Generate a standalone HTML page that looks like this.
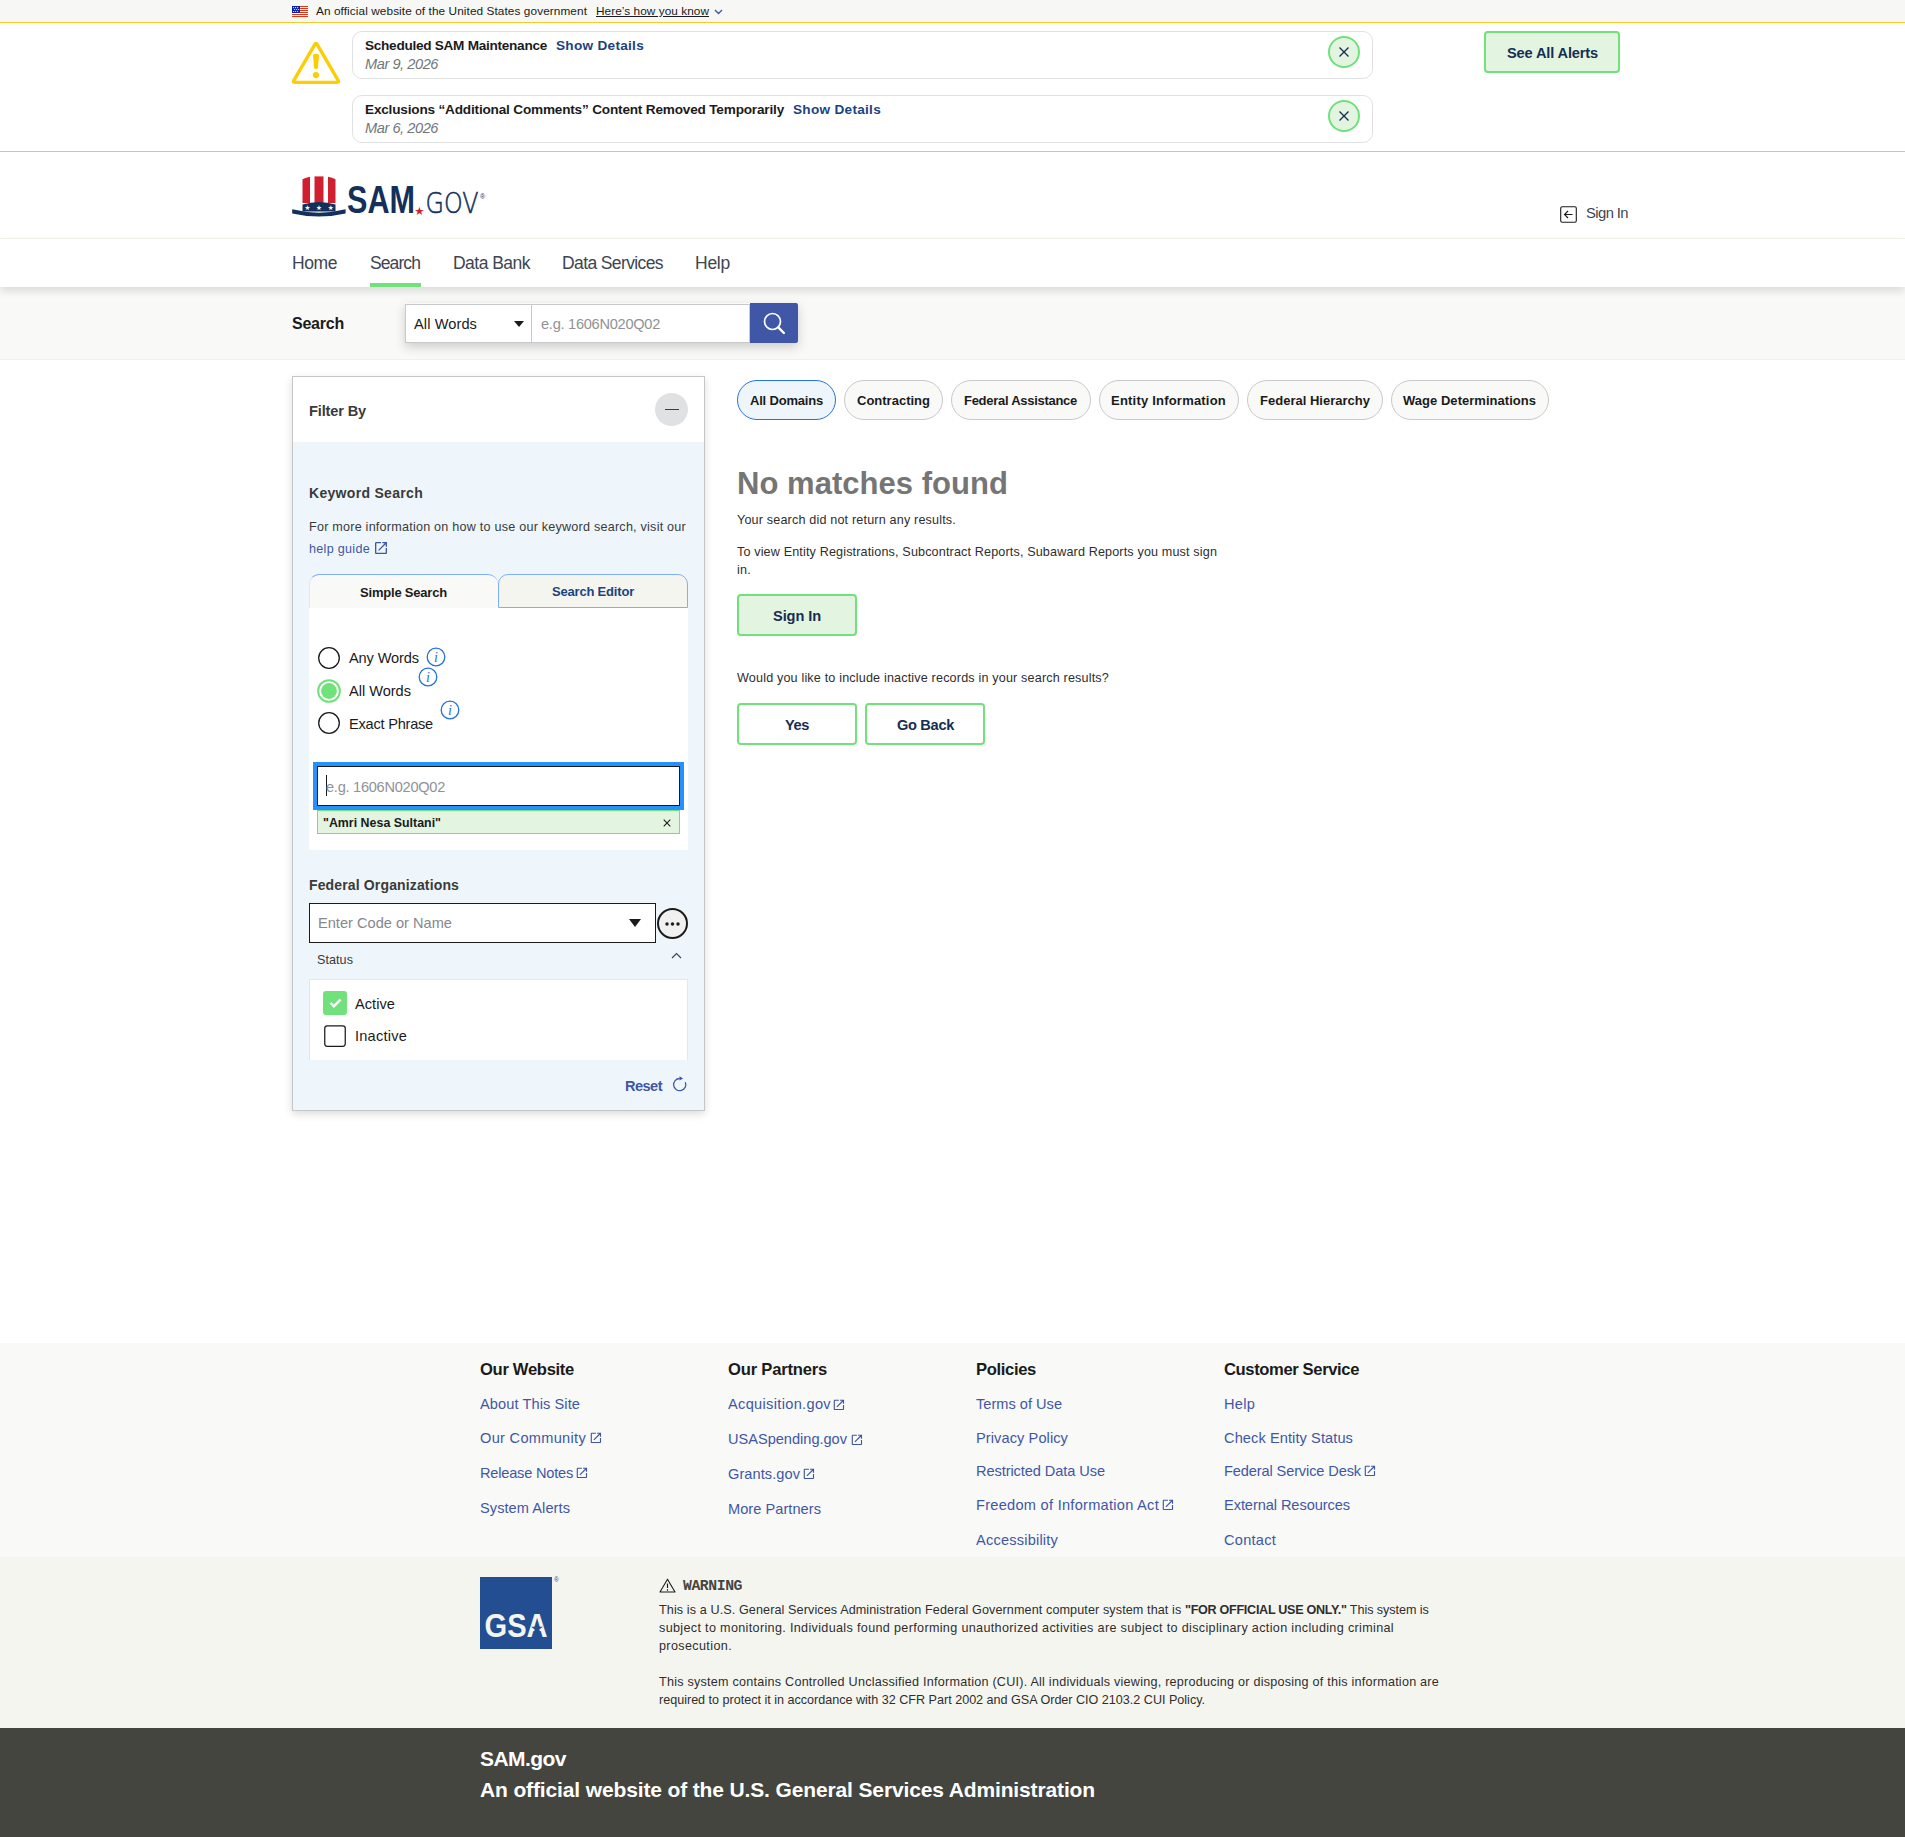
<!DOCTYPE html>
<html lang="en">
<head>
<meta charset="utf-8">
<title>SAM.gov | Search</title>
<style>
html,body{margin:0;padding:0}
body{width:1905px;height:1837px;position:relative;overflow:hidden;background:#fff;font-family:"Liberation Sans",sans-serif;color:#1b1b1b;font-size:14px}
.bg{position:absolute;left:0;width:1905px}
.a{position:absolute}
.t{position:absolute;white-space:nowrap;line-height:20px;height:20px;margin:0;font-weight:normal}
.b{font-weight:bold}
.i{font-style:italic}
.lnk{color:#3f57a6}
svg{position:absolute;overflow:visible}
/* alerts */
.card{position:absolute;left:352px;width:1019px;height:46px;border:1px solid #dfe1e2;border-radius:10px;background:#fff}
.close{position:absolute;left:1328px;width:28px;height:28px;border:2px solid #70e17b;border-radius:50%;background:#e3f5e1}
.btn{position:absolute;box-sizing:border-box;border:2px solid #70e17b;border-radius:4px;background:#fff}
.btn.fill{background:#e3f5e1}
.navy{color:#162e51}
.nav{font-size:17.5px;color:#3d4551;line-height:24px;height:24px}
.pill{position:absolute;top:380px;height:38px;border:1px solid #c9c9c9;border-radius:20px;background:#f9f9f7}
.pill.sel{border-color:#2672de;background:#eff6fb}
.pt{font-size:13px;font-weight:bold;top:391px}
.p13{font-size:12.6px;color:#2e2e2e}
.fh{font-size:16.6px;font-weight:bold;top:1359.8px}
.fl{font-size:14.6px;color:#3f57a6}
.radio{position:absolute;width:19.6px;height:19.6px;border:1.7px solid #1b1b1b;border-radius:50%;background:#fff}
.rl{font-size:14.6px}
.info{position:absolute;width:16px;height:16px;border:1.5px solid #2672de;border-radius:50%;color:#2672de;font-size:13px;line-height:16px;text-align:center;font-style:italic;font-family:"Liberation Serif",serif;font-weight:bold}
</style>
</head>
<body>

<!-- ===== government banner ===== -->
<section aria-label="Official government website">
  <div class="bg" style="top:0;height:22px;background:#f7f7f5"></div>
  <svg class="a" style="left:292px;top:6px" width="16" height="11" viewBox="0 0 16 11">
    <rect width="16" height="11" fill="#fff"/>
    <g fill="#dd3618"><rect y="0" width="16" height="1"/><rect y="2" width="16" height="1"/><rect y="4" width="16" height="1"/><rect y="6" width="16" height="1"/><rect y="8" width="16" height="1"/><rect y="10" width="16" height="1"/></g>
    <rect width="8" height="7" fill="#0a1fb0"/>
    <g fill="#fff"><circle cx="1.6" cy="1.6" r="0.62"/><circle cx="3.6" cy="1.6" r="0.62"/><circle cx="5.6" cy="1.6" r="0.62"/><circle cx="2.6" cy="3.5" r="0.62"/><circle cx="4.6" cy="3.5" r="0.62"/><circle cx="6.6" cy="3.5" r="0.62"/><circle cx="1.6" cy="5.5" r="0.62"/><circle cx="3.6" cy="5.5" r="0.62"/><circle cx="5.6" cy="5.5" r="0.62"/></g>
  </svg>
  <span class="t" style="letter-spacing:0.085px;left:316px;top:1px;font-size:11.8px">An official website of the United States government</span>
  <span class="t" style="letter-spacing:0.057px;left:596px;top:1px;font-size:11.8px;text-decoration:underline">Here’s how you know</span>
  <svg style="left:714px;top:9px" width="9" height="6" viewBox="0 0 9 6"><path d="M1 1l3.5 3.5L8 1" fill="none" stroke="#3f57a6" stroke-width="1.4"/></svg>
</section>

<!-- ===== alerts ===== -->
<section aria-label="Alerts">
  <div class="bg" style="top:22px;height:128px;background:#fff;border-top:1px solid #f5cb25;border-bottom:1px solid #f5cb25"></div>
  <svg style="left:292px;top:42px" width="48" height="42" viewBox="0 0 48 42">
    <path d="M25.26 2.58 L46.07 38.24 Q47.33 40.4 44.83 40.4 L3.17 40.4 Q0.67 40.4 1.93 38.24 L22.74 2.58 Q24 0.42 25.26 2.58 Z" fill="none" stroke="#face00" stroke-width="3.4" stroke-linejoin="round"/>
    <path d="M21 13.6 Q21 11.8 24 11.8 Q27 11.8 27 13.6 L26 25.6 Q25.9 27.1 24 27.1 Q22.1 27.1 22 25.6 Z" fill="#face00"/>
    <circle cx="23.95" cy="33.1" r="3.1" fill="#face00"/>
  </svg>

  <div class="card" style="top:31px"></div>
  <h2 class="t b" style="letter-spacing:-0.274px;left:365px;top:36px;font-size:13.6px">Scheduled SAM Maintenance</h2>
  <a class="t b" style="letter-spacing:0.283px;left:556px;top:36px;font-size:13.6px;color:#1a4480">Show Details</a>
  <span class="t i" style="letter-spacing:-0.445px;left:365px;top:53.5px;font-size:14.6px;color:#71767a">Mar 9, 2026</span>
  <div class="close" style="top:36px"></div>
  <svg style="left:1338px;top:46px" width="12" height="12" viewBox="0 0 12 12"><path d="M1.5 1.5l9 9M10.5 1.5l-9 9" stroke="#162e51" stroke-width="1.4" fill="none"/></svg>

  <div class="card" style="top:95px"></div>
  <h2 class="t b" style="letter-spacing:-0.188px;left:365px;top:100px;font-size:13.6px">Exclusions “Additional Comments” Content Removed Temporarily</h2>
  <a class="t b" style="letter-spacing:0.283px;left:793px;top:100px;font-size:13.6px;color:#1a4480">Show Details</a>
  <span class="t i" style="letter-spacing:-0.445px;left:365px;top:117.5px;font-size:14.6px;color:#71767a">Mar 6, 2026</span>
  <div class="close" style="top:100px"></div>
  <svg style="left:1338px;top:110px" width="12" height="12" viewBox="0 0 12 12"><path d="M1.5 1.5l9 9M10.5 1.5l-9 9" stroke="#162e51" stroke-width="1.4" fill="none"/></svg>

  <div class="btn fill" style="left:1484px;top:31px;width:136px;height:42px"></div>
  <span class="t b navy" style="letter-spacing:-0.144px;left:1507px;top:42.5px;font-size:14.6px">See All Alerts</span>
</section>

<!-- ===== header ===== -->
<header>
  <div class="bg" style="top:152px;height:86px;background:#fff;border-bottom:1px solid #f3f1ea"></div>
  <!-- logo -->
  <svg style="left:292px;top:174px" width="196" height="44" viewBox="0 0 196 44">
    <!-- hat stripes -->
    <path d="M10.5 5.3 Q14 3.4 18 2.8 V29 H10.5Z" fill="#d02030"/>
    <path d="M22.5 2.4 H31.5 V29 H22.5Z" fill="#d02030"/>
    <path d="M36 2.8 Q40 3.4 43.5 5.3 V29 H36Z" fill="#d02030"/>
    <!-- band -->
    <path d="M10.5 30.6 Q27 25.6 43.5 30.6 V37.5 H10.5Z" fill="#14305a"/>
    <!-- brim -->
    <path d="M0.2 35.3 Q27 42 53.6 35.3 L53.6 39.4 Q27 45.6 0.2 39.4Z" fill="#14305a"/>
    <g fill="#fff" font-size="6.5" font-family="DejaVu Sans, sans-serif" text-anchor="middle"><text x="15.4" y="35.6">★</text><text x="27" y="35.6">★</text><text x="38.6" y="35.6">★</text></g>
    <text x="55" y="38.6" font-family="Liberation Sans, sans-serif" font-weight="bold" font-size="39.5" fill="#14305a" textLength="68" lengthAdjust="spacingAndGlyphs">SAM</text>
    <text x="127.4" y="41.4" font-family="DejaVu Sans, sans-serif" font-size="11.5" fill="#d02030" text-anchor="middle">★</text>
    <text x="133.5" y="38.7" font-family="DejaVu Sans, sans-serif" font-weight="200" font-size="28.4" fill="#14305a" stroke="#14305a" stroke-width="0.55" textLength="53" lengthAdjust="spacingAndGlyphs">GOV</text>
    <text x="188" y="25" font-family="Liberation Sans, sans-serif" font-size="7" fill="#14305a">®</text>
  </svg>
  <!-- sign in -->
  <svg style="left:1560px;top:206px" width="17" height="17" viewBox="0 0 17 17"><rect x="0.7" y="0.7" width="15.6" height="15.6" rx="1.5" fill="none" stroke="#1b1b1b" stroke-width="1.1"/><path d="M12.5 8.5h-8M8 5l-3.5 3.5L8 12" fill="none" stroke="#1b1b1b" stroke-width="1.1"/></svg>
  <a class="t" style="letter-spacing:-0.583px;left:1586px;top:203px;font-size:14.8px;color:#3d4551">Sign In</a>
</header>

<!-- ===== nav ===== -->
<nav>
  <div class="bg" style="top:239px;height:48px;background:#fff;box-shadow:0 4px 8px rgba(0,0,0,.12)"></div>
  <a class="t nav" style="letter-spacing:-0.422px;left:292px;top:251px">Home</a>
  <a class="t nav" style="letter-spacing:-0.909px;left:370px;top:251px">Search</a>
  <a class="t nav" style="letter-spacing:-0.524px;left:453px;top:251px">Data Bank</a>
  <a class="t nav" style="letter-spacing:-0.611px;left:562px;top:251px">Data Services</a>
  <a class="t nav" style="letter-spacing:-0.25px;left:695px;top:251px">Help</a>
  <div class="a" style="left:370px;top:283px;width:51px;height:4px;background:#70e17b"></div>
</nav>

<!-- ===== search bar ===== -->
<section aria-label="Search">
  <div class="bg" style="top:287px;height:72px;background:#f9f9f7;border-bottom:1px solid #f0f0ec;z-index:-1"></div>
  <span class="t b" style="letter-spacing:-0.229px;left:292px;top:314px;font-size:16px;color:#1b1b1b">Search</span>
  <div class="a" style="left:405px;top:303px;width:393px;height:40px;box-shadow:0 4px 10px rgba(0,0,0,.18)"></div>
  <div class="a" style="left:405px;top:303.5px;width:125.5px;height:37.5px;border:1px solid #c6cace;background:#fff"></div>
  <span class="t" style="letter-spacing:0.09px;left:414px;top:314px;font-size:14.6px">All Words</span>
  <svg style="left:514px;top:321px" width="10" height="6" viewBox="0 0 10 6"><path d="M0 0h10L5 6z" fill="#1b1b1b"/></svg>
  <div class="a" style="left:531.5px;top:303.5px;width:217.5px;height:37.5px;border:1px solid #c6cace;border-left:0;background:#fff;box-shadow:-1px 0 0 #c6cace"></div>
  <span class="t" style="letter-spacing:-0.271px;left:541px;top:314px;font-size:14.6px;color:#8f9296">e.g. 1606N020Q02</span>
  <div class="a" style="left:750px;top:303px;width:48px;height:40px;background:#3f57a6;border-radius:0 2px 2px 0"></div>
  <svg style="left:763px;top:312px" width="23" height="23" viewBox="0 0 23 23"><circle cx="9.5" cy="9.5" r="8" fill="none" stroke="#fff" stroke-width="1.7"/><path d="M15.3 15.3l5.6 5.7" stroke="#fff" stroke-width="2.4" stroke-linecap="round"/></svg>
</section>

<main>
<!-- ===== filter panel ===== -->
<aside>
  <div class="a" style="left:292px;top:376px;width:411px;height:733px;border:1px solid #c4c6c8;background:#eff6fb;box-shadow:0 3px 8px rgba(0,0,0,.14)"></div>
  <div class="a" style="left:293px;top:377px;width:411px;height:65px;background:#fff"></div>
  <h3 class="t b" style="letter-spacing:-0.155px;left:309px;top:401px;font-size:14.6px;color:#3a3a3a">Filter By</h3>
  <div class="a" style="left:655px;top:393px;width:33px;height:33px;border-radius:50%;background:#dfe1e2"></div>
  <div class="a" style="left:665px;top:409px;width:14px;height:1px;background:#1a4480"></div>

  <h4 class="t b" style="letter-spacing:0.306px;left:309px;top:483px;font-size:14px;color:#3a3a3a">Keyword Search</h4>
  <span class="t" style="letter-spacing:0.225px;left:309px;top:517px;font-size:12.6px;color:#3a3a3a">For more information on how to use our keyword search, visit our</span>
  <a class="t" style="letter-spacing:0.287px;left:309px;top:539px;font-size:12.6px;color:#3f57a6">help guide</a>
  <svg style="left:373px;top:540px" width="16" height="16" viewBox="0 0 24 24"><path fill="#3f57a6" d="M19 19H5V5h7V3H5c-1.11 0-2 .9-2 2v14c0 1.1.89 2 2 2h14c1.1 0 2-.9 2-2v-7h-2v7zM14 3v2h3.59l-9.83 9.83 1.41 1.41L19 6.41V10h2V3h-7z"/></svg>

  <!-- tabs -->
  <div class="a" style="left:309px;top:574px;width:188px;height:34px;border-top:1px solid #81aefc;border-left:1px solid #d9e8f6;border-radius:10px 10px 0 0;background:#f9f9f7"></div>
  <div class="a" style="left:498px;top:574px;width:188px;height:32px;border:1px solid #81aefc;border-radius:10px 10px 0 0;background:#f5f5f0"></div>
  <span class="t b" style="letter-spacing:-0.201px;left:360px;top:583px;font-size:13px">Simple Search</span>
  <span class="t b" style="letter-spacing:-0.195px;left:552px;top:582px;font-size:13px;color:#1a4480">Search Editor</span>
  <div class="a" style="left:309px;top:608px;width:379px;height:242px;background:#fff"></div>

  <svg style="left:316.90px;top:645.85px" width="24" height="24" viewBox="0 0 24 24"><circle cx="12" cy="12" r="10.3" fill="#fff" stroke="#1b1b1b" stroke-width="1.3"/></svg>
  <span class="t rl" style="letter-spacing:-0.123px;left:349px;top:648px">Any Words</span>
  <svg style="left:425.24px;top:645.61px" width="22" height="22" viewBox="0 0 22 22"><circle cx="11" cy="11" r="8.8" fill="#fff" stroke="#2672de" stroke-width="1.3"/><text x="11" y="15.6" text-anchor="middle" font-family="Liberation Serif, serif" font-style="italic" font-size="14" fill="#2672de">i</text></svg>
  <svg style="left:315.90px;top:677.90px" width="26" height="26" viewBox="0 0 26 26"><circle cx="13" cy="13" r="10.85" fill="#fff" stroke="#70e17b" stroke-width="2"/><circle cx="13" cy="13" r="7.9" fill="#70e17b"/></svg>
  <span class="t rl" style="letter-spacing:-0.021px;left:349px;top:681px">All Words</span>
  <svg style="left:417.12px;top:666.38px" width="22" height="22" viewBox="0 0 22 22"><circle cx="11" cy="11" r="8.8" fill="#fff" stroke="#2672de" stroke-width="1.3"/><text x="11" y="15.6" text-anchor="middle" font-family="Liberation Serif, serif" font-style="italic" font-size="14" fill="#2672de">i</text></svg>
  <svg style="left:316.90px;top:711.30px" width="24" height="24" viewBox="0 0 24 24"><circle cx="12" cy="12" r="10.3" fill="#fff" stroke="#1b1b1b" stroke-width="1.3"/></svg>
  <span class="t rl" style="letter-spacing:-0.233px;left:349px;top:714px">Exact Phrase</span>
  <svg style="left:439.01px;top:699.11px" width="22" height="22" viewBox="0 0 22 22"><circle cx="11" cy="11" r="8.8" fill="#fff" stroke="#2672de" stroke-width="1.3"/><text x="11" y="15.6" text-anchor="middle" font-family="Liberation Serif, serif" font-style="italic" font-size="14" fill="#2672de">i</text></svg>

  <div class="a" style="left:313px;top:762px;width:363px;height:40px;border:4px solid #2491ff;background:#fff"></div>
  <div class="a" style="left:317px;top:766px;width:361px;height:38px;border:1px solid #1b1b1b;background:#fff"></div>
  <div class="a" style="left:326px;top:775px;width:1px;height:21px;background:#1b1b1b"></div>
  <span class="t" style="letter-spacing:-0.271px;left:326px;top:776.5px;font-size:14.6px;color:#8f9296">e.g. 1606N020Q02</span>
  <div class="a" style="left:317px;top:810px;width:361px;height:22px;border:1px solid #70e17b;background:#e3f5e1"></div>
  <span class="t b" style="letter-spacing:0.011px;left:323px;top:812.7px;font-size:12.4px">"Amri Nesa Sultani"</span>
  <svg style="left:663px;top:819px" width="8" height="8" viewBox="0 0 8 8"><path d="M.7.7l6.6 6.6M7.3.7L.7 7.3" stroke="#1b1b1b" stroke-width="1.1"/></svg>

  <h4 class="t b" style="letter-spacing:0.141px;left:309px;top:875px;font-size:14px;color:#3a3a3a">Federal Organizations</h4>
  <div class="a" style="left:309px;top:903px;width:345px;height:38px;border:1px solid #1b1b1b;background:#fff"></div>
  <span class="t" style="letter-spacing:0.009px;left:318px;top:913px;font-size:14.6px;color:#85888c">Enter Code or Name</span>
  <svg style="left:629px;top:919px" width="12" height="8" viewBox="0 0 12 8"><path d="M0 0h12L6 8z" fill="#1b1b1b"/></svg>
  <div class="a" style="left:656.5px;top:907.5px;width:27.5px;height:27.5px;border:2px solid #1b1b1b;border-radius:50%;background:#f0f0f0"></div>
  <svg style="left:665px;top:921.6px" width="15" height="4" viewBox="0 0 15 4"><circle cx="2" cy="2" r="1.75" fill="#1b1b1b"/><circle cx="7.5" cy="2" r="1.75" fill="#1b1b1b"/><circle cx="13" cy="2" r="1.75" fill="#1b1b1b"/></svg>

  <span class="t" style="letter-spacing:0.049px;left:317px;top:949.7px;font-size:12.6px;color:#3a3a3a">Status</span>
  <svg style="left:671px;top:952px" width="11" height="7" viewBox="0 0 11 7"><path d="M1 6l4.5-4.5L10 6" fill="none" stroke="#3d4551" stroke-width="1.2"/></svg>
  <div class="a" style="left:309px;top:979px;width:377px;height:80px;background:#fff;border:1px solid #e3e7eb;border-bottom:0"></div>
  <div class="a" style="left:323px;top:991px;width:24px;height:24px;border-radius:3px;background:#70e17b"></div>
  <svg style="left:329px;top:998px" width="13" height="10" viewBox="0 0 13 10"><path d="M1.5 4.8l3.4 3.4L11.5 1.6" fill="none" stroke="#fff" stroke-width="2.4"/></svg>
  <span class="t rl" style="letter-spacing:0.042px;left:355px;top:993.7px">Active</span>
  <svg style="left:323px;top:1024px" width="24" height="24" viewBox="0 0 24 24"><rect x="1.75" y="1.75" width="20.5" height="20.5" rx="2.5" fill="#fff" stroke="#1b1b1b" stroke-width="1.25"/></svg>
  <span class="t rl" style="letter-spacing:0.213px;left:355px;top:1025.7px">Inactive</span>

  <a class="t b" style="letter-spacing:-0.55px;left:625px;top:1075.7px;font-size:14.6px;color:#3f57a6">Reset</a>
  <svg style="left:672px;top:1076px" width="16" height="16" viewBox="0 0 16 16"><path d="M13.3 6.2A6.1 6.1 0 1 1 7.7 2.5" fill="none" stroke="#3f57a6" stroke-width="1.3"/><path d="M7.5 0.2L11.1 2.4L7.5 4.6z" fill="#3f57a6"/></svg>
</aside>

<!-- ===== results ===== -->
<section aria-label="Results">
  <div class="pill sel" style="left:737px;width:97px"></div><span class="t pt" style="letter-spacing:-0.193px;left:750px">All Domains</span>
  <div class="pill" style="left:844px;width:97px"></div><span class="t pt" style="letter-spacing:0.004px;left:857px">Contracting</span>
  <div class="pill" style="left:951px;width:138px"></div><span class="t pt" style="letter-spacing:-0.28px;left:964px">Federal Assistance</span>
  <div class="pill" style="left:1099px;width:138px"></div><span class="t pt" style="letter-spacing:0.21px;left:1111px">Entity Information</span>
  <div class="pill" style="left:1247px;width:134px"></div><span class="t pt" style="letter-spacing:0.009px;left:1260px">Federal Hierarchy</span>
  <div class="pill" style="left:1391px;width:156px"></div><span class="t pt" style="letter-spacing:0.03px;left:1403px">Wage Determinations</span>

  <h1 class="t b" style="letter-spacing:0.037px;left:737px;top:464px;font-size:31px;line-height:40px;height:40px;color:#757575">No matches found</h1>
  <p class="t p13" style="letter-spacing:0.17px;left:737px;top:509.7px">Your search did not return any results.</p>
  <p class="t p13" style="letter-spacing:0.145px;left:737px;top:541.7px">To view Entity Registrations, Subcontract Reports, Subaward Reports you must sign</p>
  <p class="t p13" style="letter-spacing:0.229px;left:737px;top:559.7px">in.</p>
  <div class="btn fill" style="left:737px;top:594px;width:120px;height:42px"></div>
  <span class="t b navy" style="letter-spacing:-0.094px;left:773px;top:606px;font-size:14.6px">Sign In</span>
  <p class="t p13" style="letter-spacing:0.167px;left:737px;top:667.7px">Would you like to include inactive records in your search results?</p>
  <div class="btn" style="left:737px;top:703px;width:120px;height:42px"></div>
  <span class="t b navy" style="letter-spacing:-0.391px;left:785px;top:715px;font-size:14.6px">Yes</span>
  <div class="btn" style="left:865px;top:703px;width:120px;height:42px"></div>
  <span class="t b navy" style="letter-spacing:-0.317px;left:897px;top:715px;font-size:14.6px">Go Back</span>
</section>
</main>

<!-- ===== footer ===== -->
<footer>
  <div class="bg" style="top:1343px;height:214px;background:#f9f9f7"></div>
  <h2 class="t fh" style="letter-spacing:-0.312px;left:480px">Our Website</h2>
  <a class="t fl" style="letter-spacing:0.086px;left:480px;top:1394px">About This Site</a>
  <a class="t fl" style="letter-spacing:0.293px;left:480px;top:1428px">Our Community</a>
  <a class="t fl" style="letter-spacing:-0.21px;left:480px;top:1462.5px">Release Notes</a>
  <a class="t fl" style="letter-spacing:0.06px;left:480px;top:1497.8px">System Alerts</a>

  <h2 class="t fh" style="letter-spacing:-0.204px;left:728px">Our Partners</h2>
  <a class="t fl" style="letter-spacing:0.322px;left:728px;top:1394px">Acquisition.gov</a>
  <a class="t fl" style="letter-spacing:-0.018px;left:728px;top:1429px">USASpending.gov</a>
  <a class="t fl" style="letter-spacing:0.061px;left:728px;top:1464px">Grants.gov</a>
  <a class="t fl" style="letter-spacing:0.041px;left:728px;top:1498.5px">More Partners</a>

  <h2 class="t fh" style="letter-spacing:-0.342px;left:976px">Policies</h2>
  <a class="t fl" style="letter-spacing:0.003px;left:976px;top:1394px">Terms of Use</a>
  <a class="t fl" style="letter-spacing:0.084px;left:976px;top:1427.8px">Privacy Policy</a>
  <a class="t fl" style="letter-spacing:-0.084px;left:976px;top:1460.8px">Restricted Data Use</a>
  <a class="t fl" style="letter-spacing:0.269px;left:976px;top:1495.3px">Freedom of Information Act</a>
  <a class="t fl" style="letter-spacing:0.194px;left:976px;top:1529.5px">Accessibility</a>

  <h2 class="t fh" style="letter-spacing:-0.383px;left:1224px">Customer Service</h2>
  <a class="t fl" style="letter-spacing:0.246px;left:1224px;top:1394px">Help</a>
  <a class="t fl" style="letter-spacing:0.086px;left:1224px;top:1427.8px">Check Entity Status</a>
  <a class="t fl" style="letter-spacing:-0.126px;left:1224px;top:1460.8px">Federal Service Desk</a>
  <a class="t fl" style="letter-spacing:-0.076px;left:1224px;top:1495.3px">External Resources</a>
  <a class="t fl" style="letter-spacing:0.243px;left:1224px;top:1529.5px">Contact</a>

  <!-- external link icons -->
  <svg style="left:588.7px;top:1431.1px" width="13.8" height="13.8" viewBox="0 0 24 24"><path fill="#3f57a6" d="M19 19H5V5h7V3H5c-1.11 0-2 .9-2 2v14c0 1.1.89 2 2 2h14c1.1 0 2-.9 2-2v-7h-2v7zM14 3v2h3.59l-9.83 9.83 1.41 1.41L19 6.41V10h2V3h-7z"/></svg>
  <svg style="left:575.0px;top:1465.9px" width="13.8" height="13.8" viewBox="0 0 24 24"><path fill="#3f57a6" d="M19 19H5V5h7V3H5c-1.11 0-2 .9-2 2v14c0 1.1.89 2 2 2h14c1.1 0 2-.9 2-2v-7h-2v7zM14 3v2h3.59l-9.83 9.83 1.41 1.41L19 6.41V10h2V3h-7z"/></svg>
  <svg style="left:832.1px;top:1397.7px" width="13.8" height="13.8" viewBox="0 0 24 24"><path fill="#3f57a6" d="M19 19H5V5h7V3H5c-1.11 0-2 .9-2 2v14c0 1.1.89 2 2 2h14c1.1 0 2-.9 2-2v-7h-2v7zM14 3v2h3.59l-9.83 9.83 1.41 1.41L19 6.41V10h2V3h-7z"/></svg>
  <svg style="left:849.5px;top:1432.5px" width="13.8" height="13.8" viewBox="0 0 24 24"><path fill="#3f57a6" d="M19 19H5V5h7V3H5c-1.11 0-2 .9-2 2v14c0 1.1.89 2 2 2h14c1.1 0 2-.9 2-2v-7h-2v7zM14 3v2h3.59l-9.83 9.83 1.41 1.41L19 6.41V10h2V3h-7z"/></svg>
  <svg style="left:801.7px;top:1467.4px" width="13.8" height="13.8" viewBox="0 0 24 24"><path fill="#3f57a6" d="M19 19H5V5h7V3H5c-1.11 0-2 .9-2 2v14c0 1.1.89 2 2 2h14c1.1 0 2-.9 2-2v-7h-2v7zM14 3v2h3.59l-9.83 9.83 1.41 1.41L19 6.41V10h2V3h-7z"/></svg>
  <svg style="left:1160.8px;top:1498.4px" width="13.8" height="13.8" viewBox="0 0 24 24"><path fill="#3f57a6" d="M19 19H5V5h7V3H5c-1.11 0-2 .9-2 2v14c0 1.1.89 2 2 2h14c1.1 0 2-.9 2-2v-7h-2v7zM14 3v2h3.59l-9.83 9.83 1.41 1.41L19 6.41V10h2V3h-7z"/></svg>
  <svg style="left:1362.9px;top:1464.4px" width="13.8" height="13.8" viewBox="0 0 24 24"><path fill="#3f57a6" d="M19 19H5V5h7V3H5c-1.11 0-2 .9-2 2v14c0 1.1.89 2 2 2h14c1.1 0 2-.9 2-2v-7h-2v7zM14 3v2h3.59l-9.83 9.83 1.41 1.41L19 6.41V10h2V3h-7z"/></svg>

  <div class="bg" style="top:1557px;height:171px;background:#f5f5f0"></div>
  <div class="a" style="left:480px;top:1577px;width:72px;height:72px;background:#234e91"></div>
  <svg style="left:480px;top:1577px" width="72" height="72" viewBox="0 0 72 72"><text x="4.6" y="59.5" font-family="Liberation Sans, sans-serif" font-weight="bold" font-size="33" fill="#f5f5f0" textLength="63" lengthAdjust="spacingAndGlyphs">GSA</text><path d="M57 45.5l1.5 4.2h4.4l-3.6 2.7 1.4 4.3-3.7-2.7-3.7 2.7 1.4-4.3-3.6-2.7h4.4z" fill="#234e91"/></svg>
  <span class="t" style="left:554px;top:1570px;font-size:6.5px;color:#234e91">®</span>
  <svg style="left:659px;top:1578px" width="17" height="15" viewBox="0 0 17 15"><path d="M8.5 1.2L16 14H1z" fill="none" stroke="#1b1b1b" stroke-width="1.1" stroke-linejoin="round"/><path d="M8.5 5.5v4.5M8.5 11.3v1.4" stroke="#1b1b1b" stroke-width="1.2"/></svg>
  <span class="t b" style="letter-spacing:-0.453px;left:683px;top:1575.6px;font-size:14.8px;font-family:'Liberation Mono',monospace;color:#454540">WARNING</span>
  <p class="t p13" style="left:659px;top:1599.7px"><span style="letter-spacing:0.105px">This is a U.S. General Services Administration Federal Government computer system that is </span><b style="letter-spacing:-0.295px">"FOR OFFICIAL USE ONLY." </b><span style="letter-spacing:-0.056px">This system is</span></p>
  <p class="t p13" style="letter-spacing:0.336px;left:659px;top:1617.7px">subject to monitoring. Individuals found performing unauthorized activities are subject to disciplinary action including criminal</p>
  <p class="t p13" style="letter-spacing:0.366px;left:659px;top:1635.7px">prosecution.</p>
  <p class="t p13" style="letter-spacing:0.237px;left:659px;top:1671.7px">This system contains Controlled Unclassified Information (CUI). All individuals viewing, reproducing or disposing of this information are</p>
  <p class="t p13" style="letter-spacing:-0.012px;left:659px;top:1689.7px">required to protect it in accordance with 32 CFR Part 2002 and GSA Order CIO 2103.2 CUI Policy.</p>

  <div class="bg" style="top:1728px;height:109px;background:#454540"></div>
  <span class="t b" style="letter-spacing:-0.549px;left:480px;top:1745px;font-size:21px;line-height:28px;height:28px;color:#fff">SAM.gov</span>
  <span class="t b" style="letter-spacing:-0.136px;left:480px;top:1776px;font-size:21px;line-height:28px;height:28px;color:#fff">An official website of the U.S. General Services Administration</span>
</footer>
</body>
</html>
